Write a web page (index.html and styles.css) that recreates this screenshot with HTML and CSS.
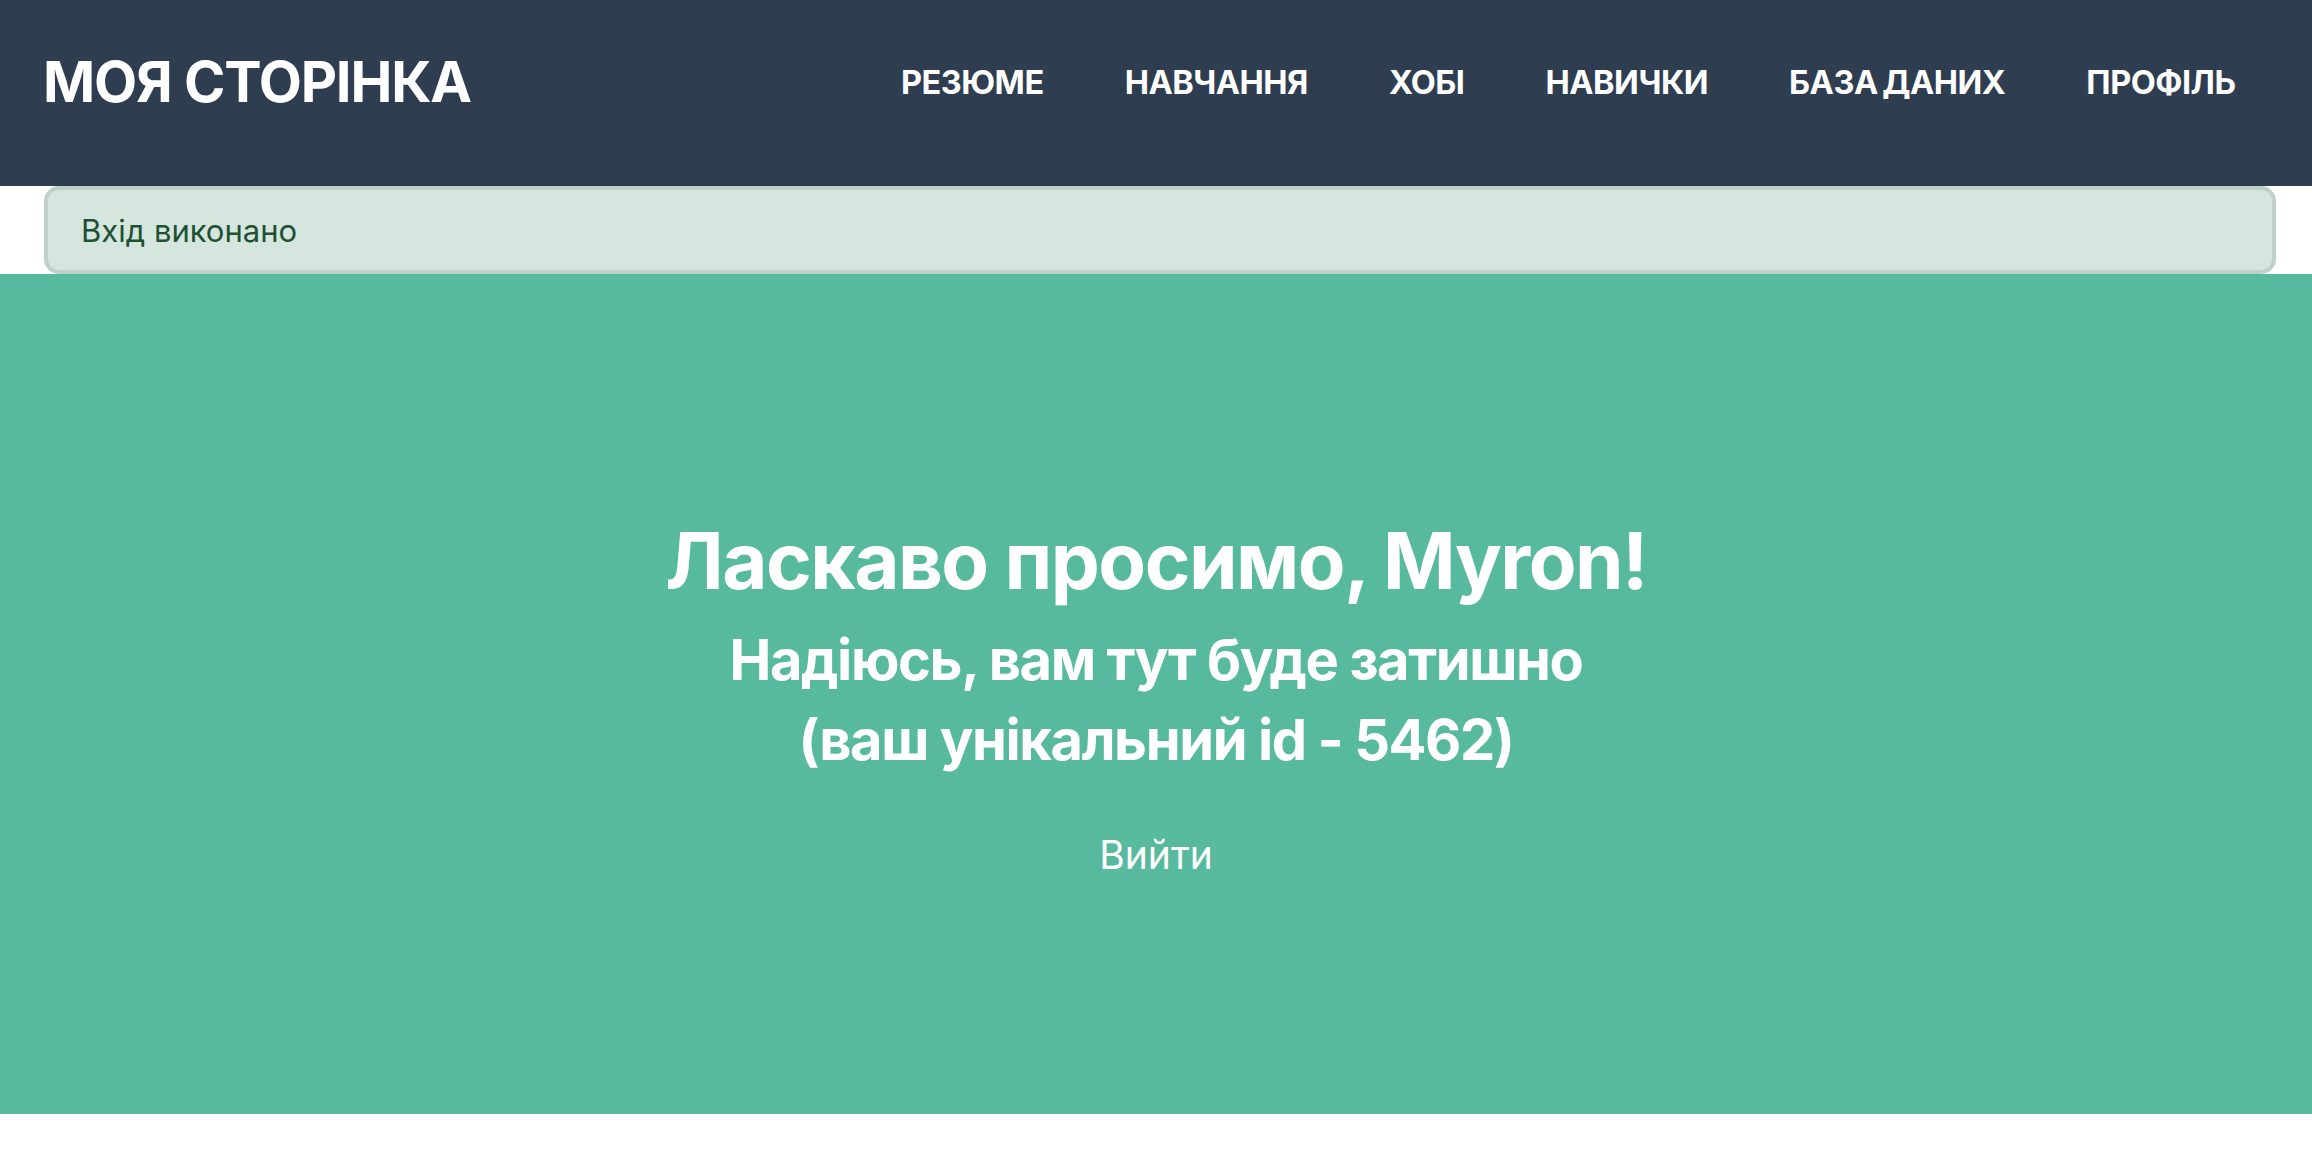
FILE: index.html
```html
<!DOCTYPE html>
<html lang="uk">
<head>
<meta charset="utf-8">
<title>Моя сторінка</title>
<link rel="stylesheet" href="styles.css">
</head>
<body>
<header class="topbar">
  <a class="brand" href="#">МОЯ СТОРІНКА</a>
  <nav class="nav">
    <a class="nav-link" href="#">РЕЗЮМЕ</a>
    <a class="nav-link" href="#">НАВЧАННЯ</a>
    <a class="nav-link" href="#">ХОБІ</a>
    <a class="nav-link" href="#">НАВИЧКИ</a>
    <a class="nav-link" href="#">БАЗА ДАНИХ</a>
    <a class="nav-link" href="#">ПРОФІЛЬ</a>
  </nav>
</header>
<div class="alert-wrap">
  <div class="alert">Вхід виконано</div>
</div>
<main class="hero">
  <h1 class="hero-title">Ласкаво просимо, Myron!</h1>
  <h2 class="hero-sub">Надіюсь, вам тут буде затишно</h2>
  <h2 class="hero-sub">(ваш унікальний id - 5462)</h2>
  <a class="logout" href="#">Вийти</a>
</main>
</body>
</html>
```
FILE: styles.css
```css
* { box-sizing: border-box; }
html, body { margin: 0; padding: 0; }
body {
  font-family: Inter, "Noto Sans", "DejaVu Sans", sans-serif;
  background: #ffffff;
  height: 1150px;
}
a { text-decoration: none; color: inherit; }

.topbar {
  height: 186px;
  background: #2e3d50;
  display: flex;
  align-items: center;
  justify-content: space-between;
  padding: 0 36px 22px 43px;
}
.brand {
  color: #ffffff;
  font-weight: 700;
  font-size: 56px;
  letter-spacing: -0.02em;
}
.nav {
  display: flex;
  align-items: center;
}
.nav-link {
  color: #ffffff;
  font-weight: 700;
  font-size: 32.5px;
  letter-spacing: -0.015em;
  word-spacing: -0.08em;
  padding: 0 40.5px;
}

.alert-wrap {
  padding: 0 36px 0 44px;
}
.alert {
  height: 88px;
  background: #d5e6de;
  border: 4px solid #bfd0c8;
  border-radius: 15px;
  color: #1f5033;
  font-size: 31px;
  display: flex;
  align-items: center;
  padding: 0 33px;
}

.hero {
  height: 840px;
  background: #57ba9e;
  color: #ffffff;
  display: flex;
  flex-direction: column;
  align-items: center;
  justify-content: flex-start;
  text-align: center;
  padding-top: 240px;
}
.hero-title {
  margin: 0 0 12px;
  font-size: 78px;
  font-weight: 700;
  letter-spacing: -0.02em;
  line-height: 94px;
}
.hero-sub {
  margin: 0;
  font-size: 56px;
  font-weight: 700;
  letter-spacing: -0.025em;
  line-height: 80px;
}
.logout {
  margin-top: 51px;
  font-size: 39px;
  font-weight: 400;
  line-height: 47px;
  color: #ffffff;
}
```
